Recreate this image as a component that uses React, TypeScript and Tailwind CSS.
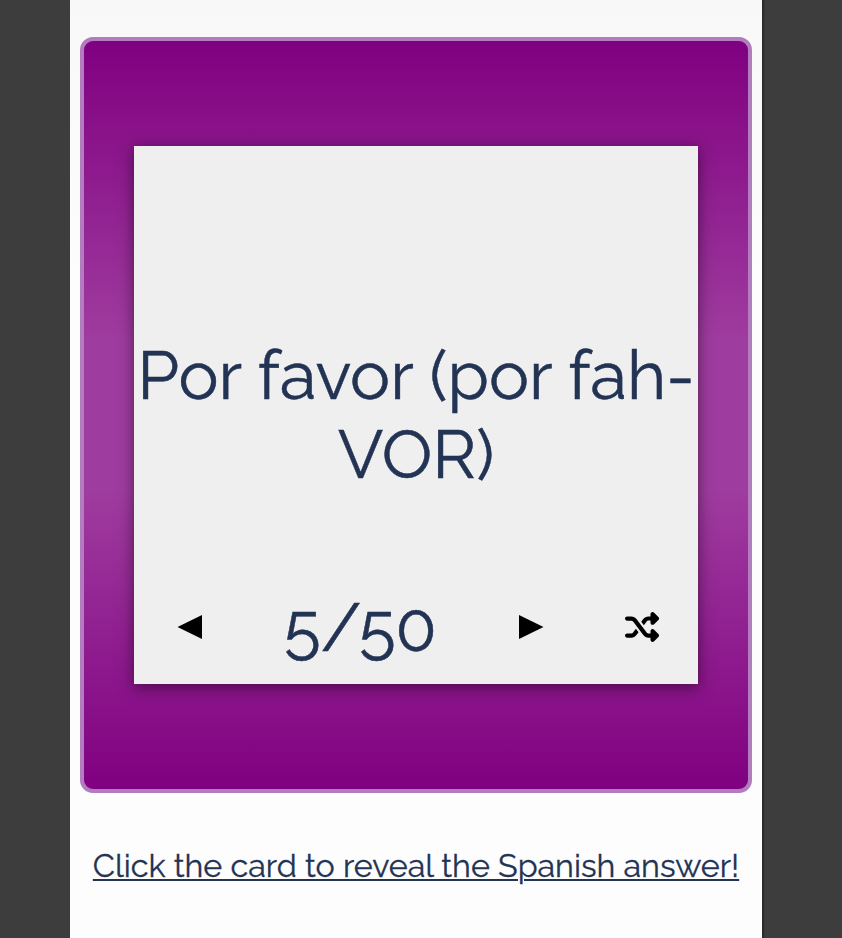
import { FaShuffle } from "react-icons/fa6";

const font = "font-['Raleway','Lato',sans-serif] text-[#223354]";

export default function App() {
  return (
    <div className={`flex h-[938px] w-[842px] overflow-hidden bg-[#3d3d3d] ${font}`}>
      <main className="ml-[70px] flex w-[692px] shrink-0 flex-col bg-linear-to-b from-[#f8f8f8] to-[#fdfdfd] to-30% px-[10px] pt-[37px] shadow-[2px_0_1px_#2c2c2c]">
        <section className="h-[756px] w-[672px] shrink-0 rounded-[13px] border-4 border-[#b27dbf] bg-[linear-gradient(to_bottom,#800080,#9f3c9f_40%,#9f3c9f_60%,#800080)] px-[50px] pt-[105px]">
          <div className="flex h-[538px] w-[564px] flex-col bg-[#efefef] shadow-[0_3px_14px_rgba(0,0,0,0.5)]">
            <div className="flex h-[430px] flex-col items-center pt-[190px] text-[67.3px] leading-[79px] whitespace-nowrap [-webkit-text-stroke:0.5px]">
              <span>Por favor (por fah-</span>
              <span>VOR)</span>
            </div>
            <div className="flex h-[100px] items-center">
              <button className="mt-[2px] ml-[43px] block" aria-label="Previous">
                <svg width="25" height="26" viewBox="0 0 25 26"><path d="M0.5 13 25 1v24z" /></svg>
              </button>
              <div className="mt-[4px] ml-[82px] w-[152px] text-[67.3px] leading-[100px] whitespace-nowrap [-webkit-text-stroke:0.5px]">
                5/50
              </div>
              <button className="mt-[2px] ml-[83px] block" aria-label="Next">
                <svg width="25" height="26" viewBox="0 0 25 26"><path d="M24.5 13 0 1v24z" /></svg>
              </button>
              <button className="mt-[1px] ml-[81px] block text-black" aria-label="Shuffle">
                <FaShuffle size={34} />
              </button>
            </div>
          </div>
        </section>
        <p className="mt-[53px] text-center text-[32.25px] leading-[40px] whitespace-nowrap underline decoration-2 underline-offset-2 [-webkit-text-stroke:0.3px]">
          Click the card to reveal the Spanish answer!
        </p>
      </main>
    </div>
  );
}
